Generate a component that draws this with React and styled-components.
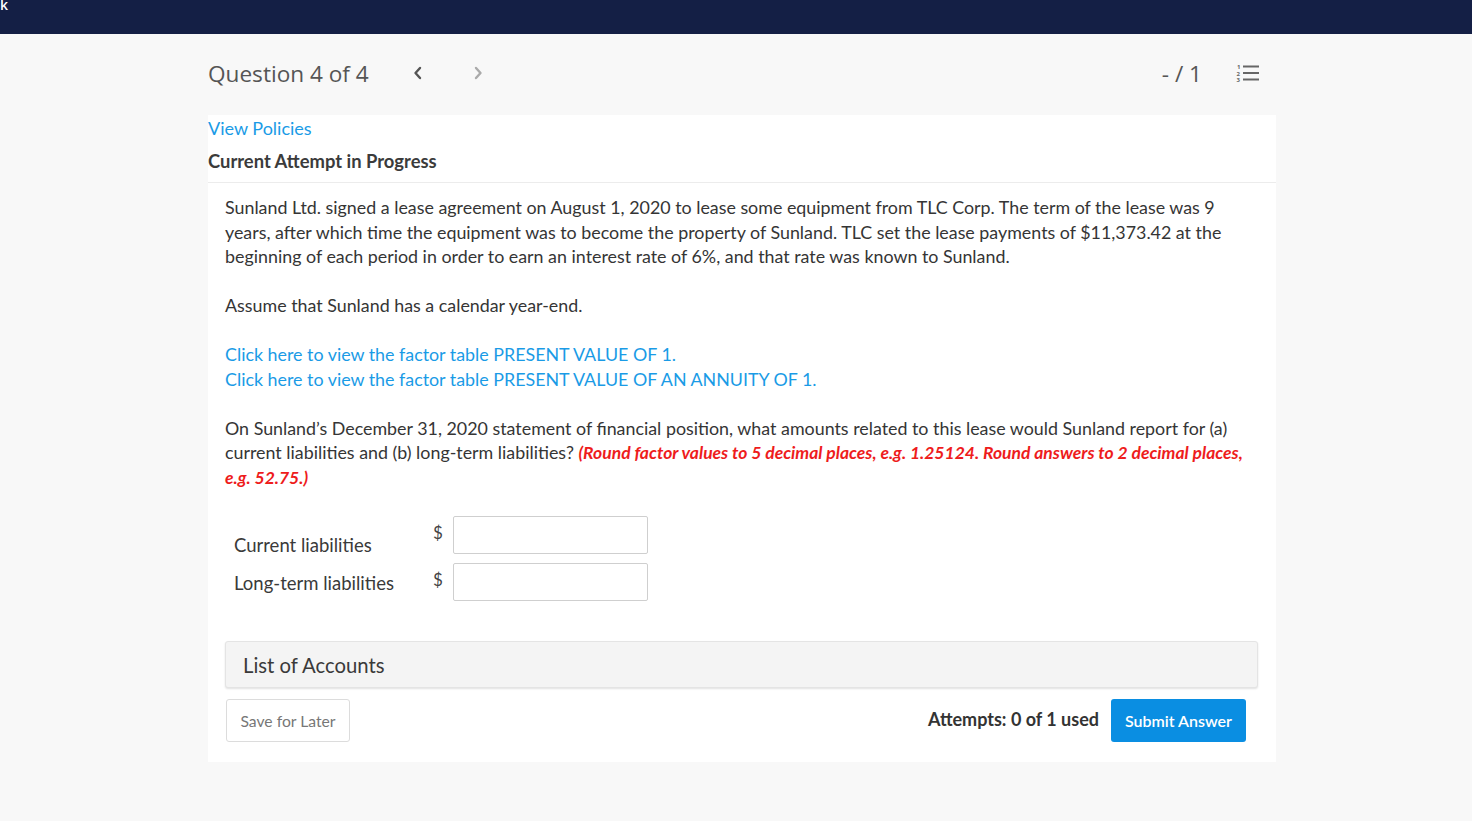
import React from "react";
import styled, { createGlobalStyle } from "styled-components";

const Global = createGlobalStyle`
  html, body { margin: 0; padding: 0; background: #f8f8f8; }
  body { font-family: Lato, "Open Sans", sans-serif; color: #333; }
  * { box-sizing: border-box; }
`;

const TopBar = styled.div`
  height: 34px;
  background: #141f45;
  color: #fff;
  font-family: "Open Sans", sans-serif;
  font-size: 14px;
  line-height: 10px;
  font-weight: 600;
  overflow: hidden;
`;

const Page = styled.div`
  width: 1068px;
  margin-left: 208px;
`;

const Header = styled.div`
  height: 81px;
  display: flex;
  align-items: center;
  padding-right: 16px;
  padding-bottom: 3px;
`;

const QTitle = styled.div`
  font-family: "Open Sans", sans-serif;
  font-size: 22.6px;
  color: #555;
  margin-right: 39px;
`;

const NavBtn = styled.span`
  display: inline-flex;
  width: 20px;
  justify-content: center;
  margin-right: 40px;
  color: ${(p) => (p.disabled ? "#aaa" : "#555")};
`;

const Spacer = styled.div`
  flex: 1;
`;

const Score = styled.div`
  font-family: "Open Sans", sans-serif;
  font-size: 22.6px;
  color: #555;
  margin-right: 34px;
`;

const Card = styled.div`
  background: #fff;
  padding-bottom: 20px;
`;

const TopInfo = styled.div`
  border-bottom: 1px solid #ececec;
  padding-bottom: 9px;
`;

const PolicyLink = styled.a`
  display: block;
  font-size: 18px;
  line-height: 26px;
  color: #1a9be6;
  text-decoration: none;
`;

const AttemptTitle = styled.div`
  font-size: 18.4px;
  font-weight: 700;
  color: #3b3b3b;
  line-height: 24px;
  margin-top: 8px;
`;

const Body = styled.div`
  padding: 12px 18px 0 17px;
`;

const Para = styled.p`
  margin: 0 0 24.5px;
  font-size: 17.85px;
  line-height: 24.5px;
  color: #353535;
`;

const Link = styled.a`
  display: block;
  color: #1a9be6;
  text-decoration: none;
`;

const Red = styled.em`
  color: #ee1c1c;
  font-weight: 700;
  font-size: 17.5px;
  line-height: 1;
`;

const Answers = styled.div`
  display: grid;
  grid-template-columns: 199px 20px 195px;
  row-gap: 9px;
  padding-left: 9px;
  margin-top: 27px;
`;

const Label = styled.div`
  font-size: 18.5px;
  color: #3a3a3a;
  align-self: end;
  line-height: 24px;
  margin-bottom: ${(p) => p.mb}px;
`;

const Dollar = styled.div`
  font-size: 17px;
  color: #444;
  padding-top: 6px;
`;

const Input = styled.input`
  height: 38px;
  width: 195px;
  border: 1px solid #cfcfcf;
  border-radius: 2px;
  margin: 0;
`;

const Accounts = styled.div`
  margin-top: 40px;
  height: 47px;
  background: #f4f4f4;
  border: 1px solid #e4e4e4;
  border-radius: 3px;
  box-shadow: 0 1px 2px rgba(0, 0, 0, 0.12);
  display: flex;
  align-items: center;
  padding-left: 17px;
  font-size: 20.3px;
  color: #3a3a3a;
`;

const Footer = styled.div`
  display: flex;
  align-items: center;
  margin-top: 11px;
  padding-right: 12px;
`;

const SaveBtn = styled.button`
  height: 43px;
  width: 124px;
  padding: 0;
  margin-left: 1px;
  background: #fff;
  border: 1px solid #dcdcdc;
  border-radius: 3px;
  font-family: Lato, sans-serif;
  font-size: 15.7px;
  color: #777;
`;

const Attempts = styled.div`
  font-size: 18px;
  font-weight: 700;
  color: #333;
  margin-right: 12px;
  margin-top: -4px;
`;

const SubmitBtn = styled.button`
  height: 43px;
  width: 135px;
  padding: 0;
  background: #0a8ee2;
  border: none;
  border-radius: 3px;
  font-family: Lato, sans-serif;
  font-size: 16px;
  font-weight: 600;
  color: #fff;
`;

const Chevron = ({ dir }) => (
  <svg width="12" height="14" viewBox="0 0 12 14" fill="none" stroke="currentColor" strokeWidth="2.4" strokeLinecap="round" strokeLinejoin="round">
    {dir === "left" ? <path d="M8 2 3.5 7 8 12" /> : <path d="M4 2 8.5 7 4 12" />}
  </svg>
);

const ListIcon = () => (
  <svg width="24" height="20" viewBox="0 0 24 20" fill="#666">
    <rect x="7" y="2.5" width="16" height="2" />
    <rect x="7" y="9" width="16" height="2" />
    <rect x="7" y="15.5" width="16" height="2" />
    <text x="1" y="6" fontSize="6" fontFamily="Open Sans, sans-serif" fontWeight="700">1</text>
    <text x="0.5" y="12.5" fontSize="6" fontFamily="Open Sans, sans-serif" fontWeight="700">2</text>
    <text x="0.5" y="19" fontSize="6" fontFamily="Open Sans, sans-serif" fontWeight="700">3</text>
  </svg>
);

export default function App() {
  return (
    <>
      <Global />
      <TopBar>k</TopBar>
      <Page>
        <Header>
          <QTitle>Question 4 of 4</QTitle>
          <NavBtn><Chevron dir="left" /></NavBtn>
          <NavBtn disabled><Chevron dir="right" /></NavBtn>
          <Spacer />
          <Score>- / 1</Score>
          <ListIcon />
        </Header>
        <Card>
          <TopInfo>
            <PolicyLink href="#">View Policies</PolicyLink>
            <AttemptTitle>Current Attempt in Progress</AttemptTitle>
          </TopInfo>
          <Body>
            <Para>
              Sunland Ltd. signed a lease agreement on August 1, 2020 to lease some equipment from TLC Corp. The term of the lease was 9 years, after which time the equipment was to become the property of Sunland. TLC set the lease payments of $11,373.42 at the beginning of each period in order to earn an interest rate of 6%, and that rate was known to Sunland.
            </Para>
            <Para>Assume that Sunland has a calendar year-end.</Para>
            <Para>
              <Link href="#">Click here to view the factor table PRESENT VALUE OF 1.</Link>
              <Link href="#">Click here to view the factor table PRESENT VALUE OF AN ANNUITY OF 1.</Link>
            </Para>
            <Para>
              On Sunland’s December 31, 2020 statement of financial position, what amounts related to this lease would Sunland report for (a) current liabilities and (b) long-term liabilities?{" "}
              <Red>(Round factor values to 5 decimal places, e.g. 1.25124. Round answers to 2 decimal places, e.g. 52.75.)</Red>
            </Para>
            <Answers>
              <Label mb={-3}>Current liabilities</Label>
              <Dollar>$</Dollar>
              <Input />
              <Label mb={6}>Long-term liabilities</Label>
              <Dollar>$</Dollar>
              <Input />
            </Answers>
            <Accounts>List of Accounts</Accounts>
            <Footer>
              <SaveBtn>Save for Later</SaveBtn>
              <Spacer />
              <Attempts>Attempts: 0 of 1 used</Attempts>
              <SubmitBtn>Submit Answer</SubmitBtn>
            </Footer>
          </Body>
        </Card>
      </Page>
    </>
  );
}
